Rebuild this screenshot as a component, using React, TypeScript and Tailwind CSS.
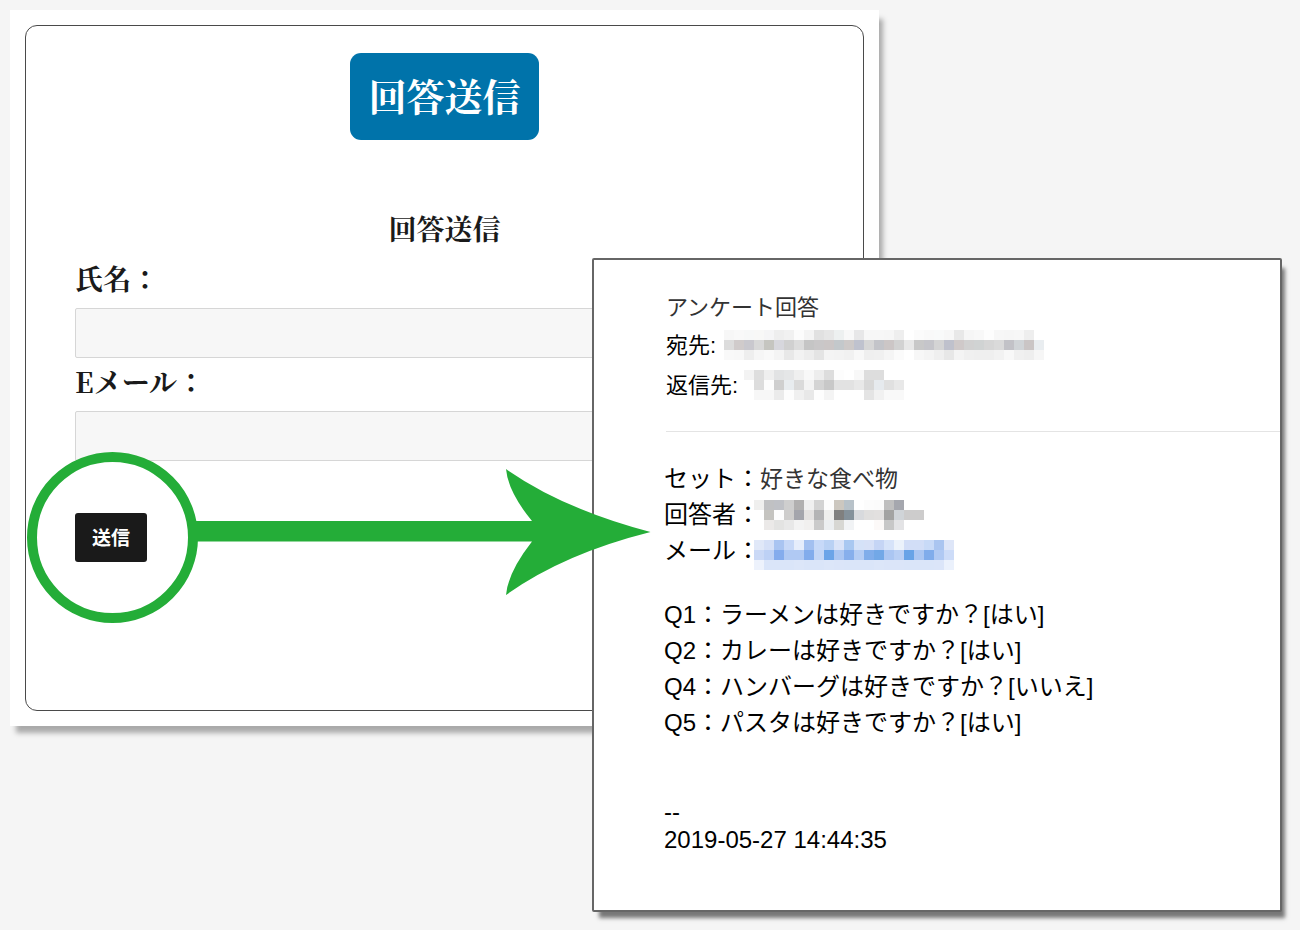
type Cell = string | null;

type MosaicProps = {
  label: string;
  rows: Cell[][];
  className?: string;
};

const CELL = 10;

function tones(row: string): Cell[] {
  return row.split(" ").map((tone) => (tone === "." ? null : "#" + tone));
}

const recipient = [
  tones("f7f7f7 f9f9f9 f7f8f8 f8f8f7 f5f5f6 eeeeee f1f1f1 fcfcfc f4f4f4 e1e1e1 e6e6e6 edf0f0 f8f8f8 e7e7e8 f7f7f7 f7f7f7 f6f6f6 eeeeee . fbfbfb f9f9f9 f9fafa f7f7f7 e8e8e8 f6f6f6 f8f8f8 fdfdfd f7f7f7 f6f6f6 f7f7f7 eeeeee ."),
  tones("dcdcdc d0cbcb c9c8ce d8d8d8 c5c5c0 d7d7dd d0d0d0 dcdcdc c5c5c5 c9c7c8 cbc6c6 c3c8cb cdc9c8 bfc2ce d6d6d6 c3c4c9 ccc6c6 d2d2d2 e8e8e8 c8c8c8 c5c5ca d4d4d4 bfc1cc cfc9c9 d1d1d1 d0d3d3 d6d6d6 dadada c2c2c7 d0d4d7 cac5c5 e9edf0"),
  tones("f9f9f9 f8f8f8 eeeeee f6f6f6 f9f9f9 f4f4f4 e8e8e8 f2f2f2 ededed e4e4e4 f4f4f4 f3f3f3 f1f1f1 f8f8f8 efefef f0f0f0 f5f5f5 fbfbfb . f7f7f7 f4f4f4 efefef e7e7e7 f4f4f4 f0f0f0 efefef efefef f2f2f2 f8f8f8 f0f0f0 eeeeee f6f6f6"),
];

const replyTo = [
  tones("f3f3f3 dedede efefef e2e3e4 e5e6e7 efefef f8f8f8 ededed dddddd fdfdfd . f8f8f8 dddddd dddddd . ."),
  tones(". dddddd fdfdfd cfcfcf e8ecef dadada f3f3f3 d4d4d4 c8c8c8 e2e2e2 e2e2e2 e8e8e8 d8d8d8 e6eaee e0e0e0 e8e8e8"),
  tones(". f7f7f7 f7f7f7 ebebeb fdfdfd f0f0f0 e8e8e8 fdfdfd f4f4f4 . . . e4e4e4 f1f1f1 f9f9f9 f9f9f9"),
];

const respondent = [
  tones("efefee c0c1c3 bfc1c6 cecece b1b0b0 f0f0f0 d3d3d3 fdfdfd ccc7bf b8c2c9 . fcfcfc fbfbfb bfbfbf a5a7ae . ."),
  tones(". c5c4c0 fdfdfd cecdcc a4a5ac e4e2e1 b4b4b5 efefed 80807f 84919a d8dadd e0dfde e2e0df a3a3a2 d0d4d8 cdcccc cdcccc"),
  tones(". ebe9e8 e3e3e2 e8e8e8 f3f3f3 f1f0ef cacaca eceff1 d7d7d3 f1f3f5 . . fcf9f8 c7c7c7 e3e3e5 . ."),
];

const mail = [
  tones("e0e8f8 d5e0f7 a9c4f1 c7d8f7 e6edfb a3c0f0 c7d9f8 b9d1f4 d9e3f8 a9c8f1 d5e2f8 d7e1f7 c5d5f5 d6e3f9 ebf2fb d2def7 d2def7 c8daf7 aac5f0 dee6f8"),
  tones("cad9f6 bdd1f5 84aced b0c9f3 b0c9f3 82acec c3d6f6 6ba4e8 abc6f2 87afec b5cdf4 80adea 72a8e7 abc6f2 b9cff4 68a3e7 abc6f2 80aceb b0c9f3 cddcf8"),
  tones("edf2fc dae5f9 dae5f9 dae5f9 dce6f9 dae5f9 dae5f9 dce6f9 dbe5f9 dae5f9 dae5f9 dae5f9 dce6f9 dbe5f9 dbe5f9 dae5f9 dae5f9 dae5f9 dbe5f9 ebf1fc"),
];

function Mosaic({ label, rows, className }: MosaicProps) {
  const width = rows[0].length * CELL;
  const height = rows.length * CELL;
  return (
    <svg
      role="img"
      aria-label={label}
      width={width}
      height={height}
      viewBox={`0 0 ${width} ${height}`}
      shapeRendering="crispEdges"
      className={className}
    >
      {rows.map((row, y) =>
        row.map((fill, x) =>
          fill ? (
            <rect key={`${x}-${y}`} x={x * CELL} y={y * CELL} width={CELL} height={CELL} fill={fill} />
          ) : null,
        ),
      )}
    </svg>
  );
}

function Field({ id, label, type }: { id: string; label: string; type: string }) {
  return (
    <div>
      <label htmlFor={id} className="block h-[52px] text-[28px] leading-[44px] font-bold">
        {label}
      </label>
      <input
        id={id}
        type={type}
        className="block h-[50px] w-full rounded-[2px] border border-[#d6d6d6] bg-[#f7f7f7] px-3 text-xl"
      />
    </div>
  );
}

function Pointer() {
  return (
    <svg
      aria-hidden="true"
      width="630"
      height="180"
      viewBox="20 448 630 180"
      className="pointer-events-none absolute top-[438px] left-[10px] z-20 overflow-visible"
    >
      <circle cx="112.5" cy="537.5" r="80.5" fill="none" stroke="#24ad38" strokeWidth="10" />
      <path
        d="M194 521H532Q508 492 506 469Q563 509 650.5 532Q563 554 506 595Q508 572 532 541.5H194Z"
        fill="#24ad38"
      />
    </svg>
  );
}

const answers = [
  "Q1：ラーメンは好きですか？[はい]",
  "Q2：カレーは好きですか？[はい]",
  "Q4：ハンバーグは好きですか？[いいえ]",
  "Q5：パスタは好きですか？[はい]",
];

export default function App() {
  return (
    <main className="grid min-h-screen grid-cols-[10px_582fr_287fr_403fr_18px] content-start bg-[#f5f5f5] pt-[10px] pb-[18px] font-['Liberation_Sans','Noto_Sans_CJK_JP',sans-serif] text-black">
      <section className="relative col-start-2 col-end-4 row-start-1 self-start bg-white p-[15px] font-['Noto_Serif_CJK_JP','Liberation_Serif','Noto_Sans_CJK_JP',serif] text-[#1a1a1a] shadow-[5px_8px_5px_-1px_#aaaaaa]">
        <form
          className="rounded-xl border border-[#4a4a4a] px-[49px] pt-[27px] pb-[148px]"
          onSubmit={(event) => event.preventDefault()}
        >
          <div className="flex justify-center">
            <button
              type="button"
              className="h-[87px] rounded-[11px] bg-[#0073aa] px-[18px] pb-1 text-[38px] leading-[83px] font-bold text-white"
            >
              回答送信
            </button>
          </div>
          <h1 className="mt-[65px] text-center text-[28px] leading-[46px] font-bold">回答送信</h1>
          <div className="mt-[5px] flex flex-col gap-px">
            <Field id="name" label="氏名：" type="text" />
            <Field id="email" label="Eメール：" type="email" />
          </div>
          <button
            type="submit"
            className="mt-[52px] block h-[49px] w-[72px] rounded-[3px] bg-[#1a1a1a] font-['Noto_Sans_CJK_JP',sans-serif] text-[19px] font-bold text-white"
          >
            送信
          </button>
        </form>
        <Pointer />
      </section>

      <article className="z-10 col-start-3 col-end-5 row-start-1 mt-[248px] self-start rounded-[2px] border-2 border-[#666666] bg-white pt-[31px] pb-[56px] pl-[70px] shadow-[5px_8px_4px_-2px_#777777]">
        <header className="ml-[2px] border-b border-[#e4e4e4] pb-[26px] text-[22px]">
          <h2 className="leading-[34px] text-[#333333]">アンケート回答</h2>
          <div className="flex h-10 items-center gap-2">
            <span>宛先:</span>
            <Mosaic label="宛先" rows={recipient} />
          </div>
          <div className="flex h-10 items-center gap-1.5">
            <span>返信先:</span>
            <Mosaic label="返信先" rows={replyTo} />
          </div>
        </header>

        <div className="mt-[29px] text-2xl leading-9">
          <p>
            セット：<span className="text-[23px] text-[#333333]">好きな食べ物</span>
          </p>
          <div className="flex h-9 items-center">
            <span>回答者：</span>
            <Mosaic label="回答者" rows={respondent} className="-ml-1.5" />
          </div>
          <div className="flex h-9 items-center">
            <span>メール：</span>
            <Mosaic label="メール" rows={mail} className="mt-2 -ml-1.5" />
          </div>
        </div>

        <ul className="mt-[28px] text-2xl leading-9">
          {answers.map((answer) => (
            <li key={answer}>{answer}</li>
          ))}
        </ul>

        <footer className="mt-[57px] text-2xl leading-7">
          <p>--</p>
          <p>2019-05-27 14:44:35</p>
        </footer>
      </article>
    </main>
  );
}
